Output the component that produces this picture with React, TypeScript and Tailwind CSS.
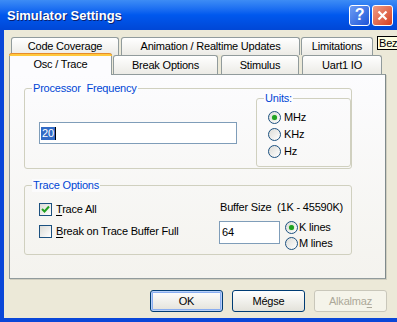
import React from "react";

const font = { fontFamily: '"Liberation Sans", Arial, sans-serif' };

function Tab({ label, w, selected = false, className = "" }: { label: string; w: number; selected?: boolean; className?: string }) {
  if (selected) {
    return (
      <div
        className={`relative z-10 flex h-[22px] items-start justify-center rounded-t-[3px] border-x border-[#919b9c] bg-[#fcfcfe] pt-[3px] text-[11px] leading-[13px] text-black ${className}`}
        style={{ width: w }}
      >
        <div className="absolute inset-x-[-1px] top-0 h-[3px] rounded-t-[3px] border-t border-[#e68b2c] bg-[#ffc83c]" />
        <span className="mt-[2px]">{label}</span>
      </div>
    );
  }
  return (
    <div
      className={`flex h-full items-center justify-center rounded-t-[3px] border border-b-0 border-[#919b9c] bg-gradient-to-b from-white to-[#ecebe6] text-[11px] leading-[13px] text-black ${className}`}
      style={{ width: w }}
    >
      {label}
    </div>
  );
}

function Radio({ checked = false }: { checked?: boolean }) {
  return (
    <div className="flex h-[13px] w-[13px] shrink-0 items-center justify-center rounded-full border border-[#1c5180] bg-gradient-to-br from-[#dcdcd7] to-white">
      {checked && <div className="h-[5px] w-[5px] rounded-full bg-[#21a121] shadow-[0_0_1px_#5bd35b]" />}
    </div>
  );
}

function Check({ checked = false }: { checked?: boolean }) {
  return (
    <div className="flex h-[13px] w-[13px] shrink-0 items-center justify-center border border-[#1c5180] bg-gradient-to-br from-[#dcdcd7] to-white">
      {checked && (
        <svg width="9" height="9" viewBox="0 0 9 9">
          <path d="M1 4 L3.5 6.5 L8 1.5" stroke="#21a121" strokeWidth="2" fill="none" />
        </svg>
      )}
    </div>
  );
}

function Btn({ children, variant = "normal" }: { children: React.ReactNode; variant?: "normal" | "default" | "disabled" }) {
  const cls =
    variant === "disabled"
      ? "border-[#c9c7ba] bg-[#f5f4ea] text-[#aca899]"
      : variant === "default"
      ? "border-[#003c74] bg-gradient-to-b from-white to-[#e3e2da] text-black shadow-[inset_0_0_0_1px_#b8d0f8,inset_0_0_0_2px_#89adf0]"
      : "border-[#003c74] bg-gradient-to-b from-white to-[#e3e2da] text-black";
  return (
    <div className={`flex h-[22px] w-[73px] items-center justify-center rounded-[3px] border text-[11px] leading-[13px] ${cls}`}>
      {children}
    </div>
  );
}

export default function App() {
  return (
    <div className="relative flex h-[322px] w-[397px] flex-col overflow-hidden bg-[#0842d6] tracking-[-0.2px]" style={font}>
      {/* Title bar */}
      <div className="flex h-[30px] shrink-0 items-center bg-gradient-to-b from-[#3d8cf5] via-[#0058ee] to-[#0047d6] pl-[7px]">
        <span className="text-[13px] font-bold leading-[15px] tracking-normal text-white [text-shadow:1px_1px_0_#0a1f6e]">Simulator Settings</span>
        <div className="ml-auto flex items-center gap-[2px] pr-[4px]">
          <div className="flex h-[21px] w-[21px] items-center justify-center rounded-[3px] border border-white bg-gradient-to-br from-[#6d9cf3] to-[#1f53d8] text-[16px] font-bold leading-none text-white">
            ?
          </div>
          <div className="flex h-[21px] w-[21px] items-center justify-center rounded-[3px] border border-white bg-gradient-to-br from-[#ec9a84] to-[#d43a1a]">
            <svg width="11" height="11" viewBox="0 0 11 11">
              <path d="M1.5 1.5 L9.5 9.5 M9.5 1.5 L1.5 9.5" stroke="white" strokeWidth="2.2" />
            </svg>
          </div>
        </div>
      </div>

      {/* Body */}
      <div className="flex flex-1 flex-col border-b-4 border-l-4 border-[#0a47d8] bg-[#ece9d8]">
        {/* Tabs */}
        <div className="ml-[5px] mt-[7px] flex flex-col">
          <div className="flex h-[18px] pl-[2px]">
            <Tab label="Code Coverage" w={108} />
            <Tab label="Animation / Realtime  Updates" w={179} className="ml-[2px]" />
            <Tab label="Limitations" w={72} className="ml-[1px]" />
          </div>
          <div className="flex h-[19px] items-start">
            <Tab label="Osc / Trace" w={103} selected className="-mt-[2px]" />
            <Tab label="Break Options" w={105} className="ml-[1px]" />
            <Tab label="Stimulus" w={78} className="ml-[3px]" />
            <Tab label="Uart1  IO" w={80} className="ml-[3px]" />
          </div>
        </div>

        {/* Panel */}
        <div className="ml-[5px] flex h-[205px] w-[377px] flex-col border border-[#919b9c] border-r-[#7f8a8b] bg-gradient-to-b from-[#fcfcfe] to-[#f4f3ee] shadow-[1px_1px_0_#d0cebf]">
          {/* Processor Frequency */}
          <div className="ml-[14px] mt-[13px] flex h-[81px] w-[328px] flex-col rounded-[3px] border border-[#d0d0bf]">
            <div className="-mt-[7px] ml-[7px] w-fit bg-[#fcfcfe] px-[1px] text-[11px] leading-[13px] text-[#0046d5]">
              Processor&nbsp; Frequency
            </div>
            <div className="flex items-start">
              <div className="ml-[14px] mt-[27px] flex h-[22px] w-[198px] items-center border border-[#7f9db9] bg-white pl-[1px]">
                <span className="bg-[#316ac5] px-[1px] text-[11px] leading-[13px] text-white">20</span>
                <span className="h-[13px] w-px bg-black" />
              </div>
              <div className="ml-[19px] mt-[3px] flex h-[69px] w-[95px] flex-col rounded-[3px] border border-[#d0d0bf]">
                <div className="-mt-[7px] ml-[7px] w-fit bg-[#fcfcfe] px-[1px] text-[11px] leading-[13px] text-[#0046d5]">
                  Units:
                </div>
                <div className="ml-[11px] mt-[4px] flex flex-col">
                  {[
                    ["MHz", true],
                    ["KHz", false],
                    ["Hz", false],
                  ].map(([l, c]) => (
                    <div key={l as string} className="flex h-[17px] items-center gap-[3px] text-[11px] leading-[13px] text-black">
                      <Radio checked={c as boolean} />
                      <span>{l as string}</span>
                    </div>
                  ))}
                </div>
              </div>
            </div>
          </div>

          {/* Trace Options */}
          <div className="ml-[14px] mt-[16px] flex h-[70px] w-[328px] flex-col rounded-[3px] border border-[#d0d0bf]">
            <div className="-mt-[7px] ml-[7px] w-fit bg-[#fbfbfc] px-[1px] text-[11px] leading-[13px] text-[#0046d5]">
              Trace Options
            </div>
            <div className="flex items-start">
              <div className="ml-[14px] mt-[11px] flex w-[180px] flex-col gap-[9px] text-[11px] leading-[13px] text-black">
                <div className="flex items-center gap-[4px]">
                  <Check checked />
                  <span>
                    <span className="underline underline-offset-2">T</span>race All
                  </span>
                </div>
                <div className="flex items-center gap-[4px]">
                  <Check />
                  <span>
                    <span className="underline underline-offset-2">B</span>reak on Trace Buffer Full
                  </span>
                </div>
              </div>
              <div className="mt-[9px] flex flex-col text-[11px] leading-[13px] text-black">
                <div className="ml-[1px]">Buffer Size&nbsp; (1K - 45590K)</div>
                <div className="mt-[5px] flex items-start">
                  <div className="mt-[2px] flex h-[23px] w-[61px] items-center border border-[#7f9db9] bg-white pl-[2px]">64</div>
                  <div className="ml-[5px] flex flex-col">
                    <div className="flex h-[16px] items-center gap-[1px]">
                      <Radio checked />
                      <span>K lines</span>
                    </div>
                    <div className="flex h-[16px] items-center gap-[1px]">
                      <Radio />
                      <span>M lines</span>
                    </div>
                  </div>
                </div>
              </div>
            </div>
          </div>
        </div>

        {/* Buttons */}
        <div className="mt-[11px] flex justify-end gap-[9px] pr-[10px]">
          <Btn variant="default">OK</Btn>
          <Btn>Mégse</Btn>
          <Btn variant="disabled">
            <span>
              Alkalma<span className="underline underline-offset-2">z</span>
            </span>
          </Btn>
        </div>
      </div>

      {/* Tooltip */}
      <div className="absolute left-[377px] top-[36px] h-[14px] w-[20px] overflow-hidden border border-r-0 border-black bg-[#ffffe1] pl-[1px] text-[11px] leading-[12px] text-black">
        Bez
      </div>
    </div>
  );
}
